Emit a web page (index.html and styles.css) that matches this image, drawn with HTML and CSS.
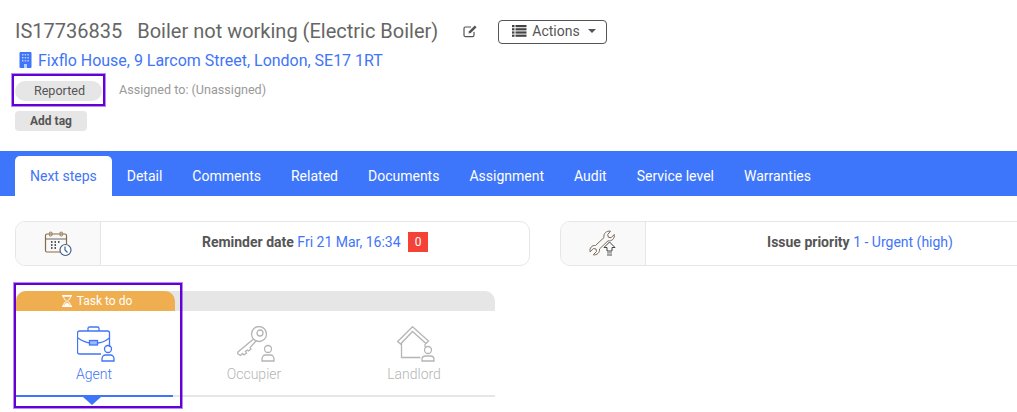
FILE: index.html
```html
<!DOCTYPE html>
<html lang="en">
<head>
    <meta charset="UTF-8">
    <title>IS17736835</title>
    <link rel="stylesheet" href="styles.css">
</head>
<body>
    <header class="issue-head">
        <div class="title-row">
            <h1 class="issue-title"><span class="issue-ref">IS17736835</span>Boiler not working (Electric Boiler)</h1>
            <svg class="edit-icon" width="15" height="14" viewBox="0 0 15 14" fill="none" stroke="#555" stroke-width="1.2">
                <path d="M11 8v3.200c0 .9-.6 1.400-1.400 1.400H2.400C1.600 12.600 1 12 1 11.200V4.400C1 3.600 1.600 3 2.400 3H8"/>
                <path d="M5.500 9.500l.5-2.300L11.800 1.400l1.800 1.800L7.800 9z" fill="#555" stroke="none"/>
            </svg>
            <button class="actions-btn">
                <svg width="15" height="12" viewBox="0 0 15 12" fill="#444">
                    <rect x="0" y="0" width="2.500" height="2.200"/><rect x="3.500" y="0" width="11" height="2.200"/>
                    <rect x="0" y="3.200" width="2.500" height="2.200"/><rect x="3.500" y="3.200" width="11" height="2.200"/>
                    <rect x="0" y="6.400" width="2.500" height="2.200"/><rect x="3.500" y="6.400" width="11" height="2.200"/>
                    <rect x="0" y="9.600" width="2.500" height="2.200"/><rect x="3.500" y="9.600" width="11" height="2.200"/>
                </svg>
                Actions
                <span class="caret"></span>
            </button>
        </div>
        <a class="address" href="#">
            <svg width="13" height="16" viewBox="0 0 13 16">
                <rect x="0.500" y="0" width="12" height="16" rx="1" fill="#3f75f8"/>
                <g fill="#b9cdfd">
                    <rect x="3" y="2" width="1.500" height="1.500"/><rect x="5.700" y="2" width="1.500" height="1.500"/><rect x="8.400" y="2" width="1.500" height="1.500"/>
                    <rect x="3" y="5" width="1.500" height="1.500"/><rect x="5.700" y="5" width="1.500" height="1.500"/><rect x="8.400" y="5" width="1.500" height="1.500"/>
                    <rect x="3" y="8" width="1.500" height="1.500"/><rect x="5.700" y="8" width="1.500" height="1.500"/><rect x="8.400" y="8" width="1.500" height="1.500"/>
                    <rect x="5" y="12" width="3" height="4"/>
                </g>
            </svg>
            Fixflo House, 9 Larcom Street, London, SE17 1RT
        </a>
        <div class="status-row">
            <span class="status-pill">Reported<span class="highlight highlight-status"></span></span>
            <span class="assigned">Assigned to: (Unassigned)</span>
        </div>
        <span class="add-tag">Add tag</span>
    </header>

    <nav class="tabs">
        <a class="tab active" href="#">Next steps</a>
        <a class="tab" href="#">Detail</a>
        <a class="tab" href="#">Comments</a>
        <a class="tab" href="#">Related</a>
        <a class="tab" href="#">Documents</a>
        <a class="tab" href="#">Assignment</a>
        <a class="tab" href="#">Audit</a>
        <a class="tab" href="#">Service level</a>
        <a class="tab" href="#">Warranties</a>
    </nav>

    <section class="info-cards">
        <div class="info-card">
            <div class="info-icon">
                <svg width="28" height="26" viewBox="0 0 28 26" fill="none" stroke="#555" stroke-width="1.200">
                    <path d="M19 21H3c-1 0-1.500-.6-1.500-1.500V4.500C1.500 3.600 2 3 3 3h18c1 0 1.500.6 1.500 1.500V13" stroke="#8a6a45"/>
                    <path d="M2 8h20" stroke="#666"/>
                    <rect x="5.500" y="1" width="2.500" height="4" rx="1.200" stroke="#a58a62"/>
                    <rect x="16" y="1" width="2.500" height="4" rx="1.200" stroke="#a58a62"/>
                    <path d="M7 11h1.500M10.500 11H12M14 11h1.500M7 14h1.500M10.500 14H12M7 17h1.500M10.500 17H12" stroke-width="1.800"/>
                    <circle cx="21.500" cy="19" r="5.500" stroke="#3f5f8f" fill="#fff"/>
                    <path d="M21 15.500V19l2.500 2.500" stroke="#3f5f8f"/>
                </svg>
            </div>
            <div class="info-body"><b>Reminder date</b> <span class="info-value">Fri 21 Mar, 16:34</span><span class="count-badge">0</span></div>
        </div>
        <div class="info-card">
            <div class="info-icon">
                <svg width="28" height="27" viewBox="0 0 28 27" fill="none" stroke="#555" stroke-width="1">
                    <path d="M21.500 1.200C17.500.5 14.200 3.500 15 7.500l-8.500 8C3 15 .3 18 1 21.800l3.500-3.300 2.500.5.500 2.500-3.300 3.300c3.800.7 6.800-2.300 6.300-5.800l8.500-8.200c3.800.7 7-2.300 6.200-6.300L22 7.800l-2.700-.6-.6-2.700z" stroke="#7a6a58"/>
                    <path d="M20.500 12l5.500 5.500h-3v3.500h-5v-3.500h-3z" stroke="#444" fill="#f9f9f9"/>
                    <path d="M18 22.800h5M18 25h5" stroke="#888" stroke-width="1.300"/>
                </svg>
            </div>
            <div class="info-body"><b>Issue priority</b> <span class="info-value">1 - Urgent (high)</span></div>
        </div>
    </section>

    <section class="party-panel">
        <div class="party-strip">
            <div class="task-label">
                <svg width="10" height="12" viewBox="0 0 10 12" fill="none" stroke="#fff" stroke-width="1">
                    <path d="M0 .7h10M0 11.300h10" stroke-width="1.400"/>
                    <path d="M1.500 1c0 2.500 1.500 4 3 5-1.500 1-3 2.500-3 5h7c0-2.500-1.500-4-3-5 1.500-1 3-2.500 3-5z"/>
                    <path d="M2 10.500c.5-1.500 2-2.500 3-3 1 .5 2.500 1.500 3 3z" fill="#fff" stroke="none"/>
                </svg>
                Task to do
            </div>
        </div>
        <div class="party-row">
            <div class="party party-active">
                <svg class="party-icon" width="40" height="36" viewBox="0 0 40 36" fill="none" stroke="#3f75f8" stroke-width="1.300">
                    <path d="M24 28H2.500C1.300 28 .5 27.200.5 26V7c0-1.200.8-2 2-2h28c1.200 0 2 .8 2 2v14"/>
                    <path d="M1 12c4 3 10 5 12 5M32.500 12c-4 3-9 5-12 5"/>
                    <rect x="12.500" y="14.500" width="8" height="4.500" fill="#9db9fb"/>
                    <path d="M11 5V2.500C11 1.500 11.500 1 12.500 1h8c1 0 1.500.5 1.500 1.500V5"/>
                    <circle cx="31" cy="23" r="3.500"/>
                    <path d="M25 35v-2c0-2.200 1.500-4 3.500-4h5c2 0 3.500 1.800 3.500 4v2z"/>
                </svg>
                <span class="party-name">Agent</span>
                <span class="party-arrow"></span>
                <span class="highlight highlight-party"></span>
            </div>
            <div class="party">
                <svg class="party-icon" width="40" height="36" viewBox="0 0 40 36" fill="none" stroke="#b5b5b5" stroke-width="1.300">
                    <circle cx="22" cy="8" r="7.500"/>
                    <circle cx="23" cy="7" r="3"/>
                    <path d="M16.500 13L1 26l-.5 1.500 3 2 2-2 1.500 1.500 2.500-2-1-1.500 2-1.500 1 1 2.500-2-1-1.500 6.500-7"/>
                    <circle cx="31" cy="23" r="3.500"/>
                    <path d="M25 35v-2c0-2.200 1.500-4 3.500-4h5c2 0 3.500 1.800 3.500 4v2z"/>
                </svg>
                <span class="party-name">Occupier</span>
            </div>
            <div class="party">
                <svg class="party-icon" width="40" height="36" viewBox="0 0 40 36" fill="none" stroke="#b5b5b5" stroke-width="1.300">
                    <path d="M.7 15.500L15.500.7 31.500 15 29 17.500 15.500 5.500 3.500 18z"/>
                    <path d="M4.500 17v14.500h19"/>
                    <path d="M28 18v3"/>
                    <circle cx="31" cy="24" r="3.500"/>
                    <path d="M25 35v-1.500c0-2 1.500-3.500 3.500-3.500h5c2 0 3.500 1.500 3.500 3.500V35z"/>
                </svg>
                <span class="party-name">Landlord</span>
            </div>
        </div>
    </section>
</body>
</html>
```

FILE: styles.css
```css
* {
    margin: 0;
    padding: 0;
    box-sizing: border-box;
}
html, body {
    height: 100%;
    overflow: hidden;
}
body {
    font-family: Roboto, "Liberation Sans", sans-serif;
    font-size: 14px;
    color: #555;
    background: #fff;
}
.issue-head {
    height: 151px;
    padding: 19px 15px 0;
}
.title-row {
    display: flex;
    align-items: center;
    height: 24px;
}
.issue-title {
    font-size: 20px;
    font-weight: 400;
    color: #666;
    white-space: nowrap;
}
.issue-ref {
    margin-right: 15px;
}
.edit-icon {
    margin-left: 25px;
}
.actions-btn {
    display: flex;
    align-items: center;
    gap: 5px;
    width: 109px;
    height: 24px;
    margin: 2px 0 0 20px;
    padding: 0 0 2px 13px;
    font-family: inherit;
    font-size: 14px;
    color: #555;
    background: #fff;
    border: 1px solid #555;
    border-radius: 4px;
}
.caret {
    width: 0;
    height: 0;
    margin-left: 3px;
    border-left: 4px solid transparent;
    border-right: 4px solid transparent;
    border-top: 4px solid #555;
}
.address {
    display: flex;
    align-items: center;
    gap: 6px;
    height: 20px;
    margin-top: 7px;
    padding-left: 4px;
    font-size: 15.98px;
    color: #3f75f8;
    text-decoration: none;
    white-space: nowrap;
}
.status-row {
    display: flex;
    align-items: center;
    gap: 17px;
    margin-top: 11px;
}
.status-pill {
    position: relative;
    width: 87px;
    height: 20px;
    padding-left: 2px;
    line-height: 20px;
    text-align: center;
    font-size: 12.6px;
    color: #555;
    background: #e6e6e6;
    border-radius: 10px;
}
.assigned {
    font-size: 12.6px;
    color: #999;
    margin-top: -3px;
}
.add-tag {
    display: block;
    width: 72px;
    height: 20px;
    margin-top: 10px;
    line-height: 20px;
    text-align: center;
    font-size: 12px;
    font-weight: 700;
    color: #555;
    background: #e6e6e6;
    border-radius: 4px;
}
.highlight {
    position: absolute;
    border: 2px solid #6200d6;
    box-shadow: 0 0 0 1px rgba(98, 0, 214, 0.45);
    pointer-events: none;
}
.highlight-status {
    left: -3px;
    top: -7px;
    width: 93px;
    height: 32px;
}
.highlight-party {
    left: -1px;
    top: -28px;
    width: 168px;
    height: 125px;
}
.tabs {
    display: flex;
    align-items: flex-end;
    height: 45px;
    padding-left: 15px;
    background: #3e76fb;
}
.tab {
    height: 40px;
    padding: 0 15px;
    line-height: 40px;
    font-size: 14px;
    color: #fff;
    text-decoration: none;
    white-space: nowrap;
}
.tab.active {
    color: #3f75f8;
    background: #fff;
    border-radius: 5px 5px 0 0;
}
.info-cards {
    display: flex;
    gap: 30px;
    width: 1075px;
    margin: 25px 0 0 15px;
}
.info-card {
    display: flex;
    flex: 0 0 515px;
    height: 45px;
    border: 1px solid #e6e6e6;
    border-radius: 10px;
    overflow: hidden;
}
.info-icon {
    display: flex;
    align-items: center;
    justify-content: center;
    width: 85px;
    background: #f9f9f9;
    border-right: 1px solid #e6e6e6;
}
.info-body {
    flex: 1;
    display: flex;
    align-items: center;
    justify-content: center;
    gap: 3.5px;
    padding-bottom: 4px;
    font-size: 14px;
    color: #555;
}
.info-value {
    color: #3f75f8;
}
.count-badge {
    width: 20px;
    height: 20px;
    margin-left: 4px;
    line-height: 20px;
    text-align: center;
    font-size: 12px;
    color: #fff;
    background: #f44336;
}
.party-panel {
    width: 480px;
    margin: 25px 0 0 15px;
}
.party-strip {
    height: 20px;
    background: #e6e6e6;
    border-radius: 10px 10px 0 0;
}
.task-label {
    display: flex;
    align-items: center;
    justify-content: center;
    gap: 5px;
    width: 159px;
    height: 20px;
    margin-left: 1px;
    padding-left: 3px;
    font-size: 12px;
    color: #fff;
    background: #efaf50;
    border-radius: 10px 10px 0 0;
}
.party-row {
    display: flex;
    height: 86px;
    border-bottom: 2px solid #e6e6e6;
}
.party {
    position: relative;
    display: flex;
    flex-direction: column;
    align-items: center;
    flex: 0 0 160px;
    padding-top: 15px;
    color: #b5b5b5;
}
.party-active {
    color: #3f75f8;
    height: 86px;
    flex-basis: 158px;
    margin-right: 1px;
    border-bottom: 2px solid #3f75f8;
}
.party-icon {
    margin-left: 5px;
}
.party-name {
    margin-top: 4px;
    font-size: 14px;
    font-weight: 300;
}
.party-arrow {
    position: absolute;
    left: 68px;
    bottom: -10px;
    width: 0;
    height: 0;
    border-left: 9px solid transparent;
    border-right: 9px solid transparent;
    border-top: 8px solid #3f75f8;
}
```
